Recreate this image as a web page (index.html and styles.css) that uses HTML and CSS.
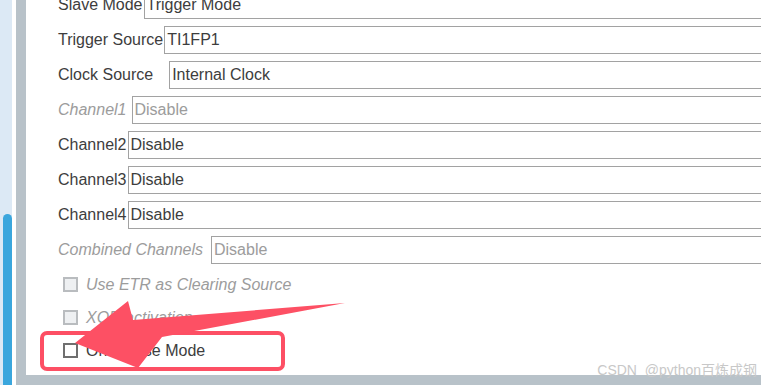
FILE: index.html
```html
<!DOCTYPE html>
<html lang="zh-CN">
<head>
    <meta charset="UTF-8">
    <title>TIM Parameter Settings</title>
    <link rel="stylesheet" href="styles.css">
</head>
<body>
    <div class="window">
        <div class="scroll-track"><div class="scroll-thumb"></div></div>
        <div class="panel">
            <div class="params">
                <div class="param"><span class="param-label">Slave Mode</span><div class="param-value">Trigger Mode</div></div>
                <div class="param"><span class="param-label">Trigger Source</span><div class="param-value">TI1FP1</div></div>
                <div class="param"><span class="param-label clock">Clock Source</span><div class="param-value">Internal Clock</div></div>
                <div class="param disabled"><span class="param-label">Channel1</span><div class="param-value">Disable</div></div>
                <div class="param"><span class="param-label">Channel2</span><div class="param-value">Disable</div></div>
                <div class="param"><span class="param-label">Channel3</span><div class="param-value">Disable</div></div>
                <div class="param"><span class="param-label">Channel4</span><div class="param-value">Disable</div></div>
                <div class="param disabled"><span class="param-label wide">Combined Channels</span><div class="param-value">Disable</div></div>

                <div class="checks">
                    <label class="check disabled"><span class="box"></span>Use ETR as Clearing Source</label>
                    <label class="check disabled"><span class="box"></span>XOR activation</label>
                    <label class="check"><span class="box"></span>One Pulse Mode</label>
                </div>
            </div>
        </div>

        <!-- 标注：红框 + 箭头 -->
        <svg class="annotation" width="761" height="385" viewBox="0 0 761 385">
            <rect x="42" y="333" width="241" height="36" rx="5" fill="none" stroke="#fd4f64" stroke-width="4"/>
            <polygon points="75,343 128,301 133,320 345,303 162,337 138,368" fill="#fd5064"/>
        </svg>

        <div class="watermark">CSDN&nbsp; @python百炼成钢</div>
    </div>
</body>
</html>
```

FILE: styles.css
```css
* {
    margin: 0;
    padding: 0;
    box-sizing: border-box;
}

body {
    font-family: 'Liberation Sans', Arial, sans-serif;
    background: white;
    overflow: hidden;
}

.window {
    position: relative;
    display: flex;
    width: 761px;
    height: 385px;
    overflow: hidden;
}

.scroll-track {
    width: 12px;
    margin-right: 4px;
    background: #dce9f5;
    padding: 214px 0 0 3px;
}

.scroll-thumb {
    height: 100%;
    background: #3aa6dd;
    border-radius: 5px 5px 0 0;
}

.panel {
    flex: 1;
    border-left: 10px solid #b8c2c9;
    border-bottom: 10px solid #b8c2c9;
    overflow: hidden;
}

.params {
    display: flex;
    flex-direction: column;
    gap: 7px;
    margin-top: -9px;
    padding-left: 32px;
}

.param {
    display: flex;
    align-items: center;
    gap: 1px;
    height: 28px;
    margin-right: -20px;
    font-size: 16px;
    color: #3d3d3d;
}

.param-label {
    white-space: nowrap;
}

.param-label.clock {
    padding-right: 15px;
}

.param-value {
    flex: 1;
    height: 28px;
    line-height: 26px;
    padding-left: 2px;
    border: 1px solid #a2a2a2;
    white-space: nowrap;
}

.param.disabled {
    color: #9c9c9c;
}

.param.disabled .param-label {
    font-style: italic;
    padding-right: 4px;
}

.param.disabled .param-label.wide {
    padding-right: 7px;
}

.checks {
    display: flex;
    flex-direction: column;
    margin-top: -3px;
    padding-left: 5px;
}

.check {
    display: flex;
    align-items: center;
    gap: 8px;
    height: 33px;
    font-size: 16px;
    color: #3d3d3d;
}

.check .box {
    width: 15px;
    height: 15px;
    border: 2px solid #6f6f6f;
    background: white;
}

.check.disabled {
    color: #9c9c9c;
    font-style: italic;
}

.check.disabled .box {
    border-color: #b9bcbf;
    background: #eef0f2;
}

.annotation {
    position: absolute;
    left: 0;
    top: 0;
    pointer-events: none;
}

.watermark {
    position: absolute;
    right: 4px;
    bottom: 6px;
    font-size: 14px;
    color: #c8c8c8;
    white-space: nowrap;
    font-family: 'Liberation Sans', 'Noto Sans CJK SC', sans-serif;
}
```
